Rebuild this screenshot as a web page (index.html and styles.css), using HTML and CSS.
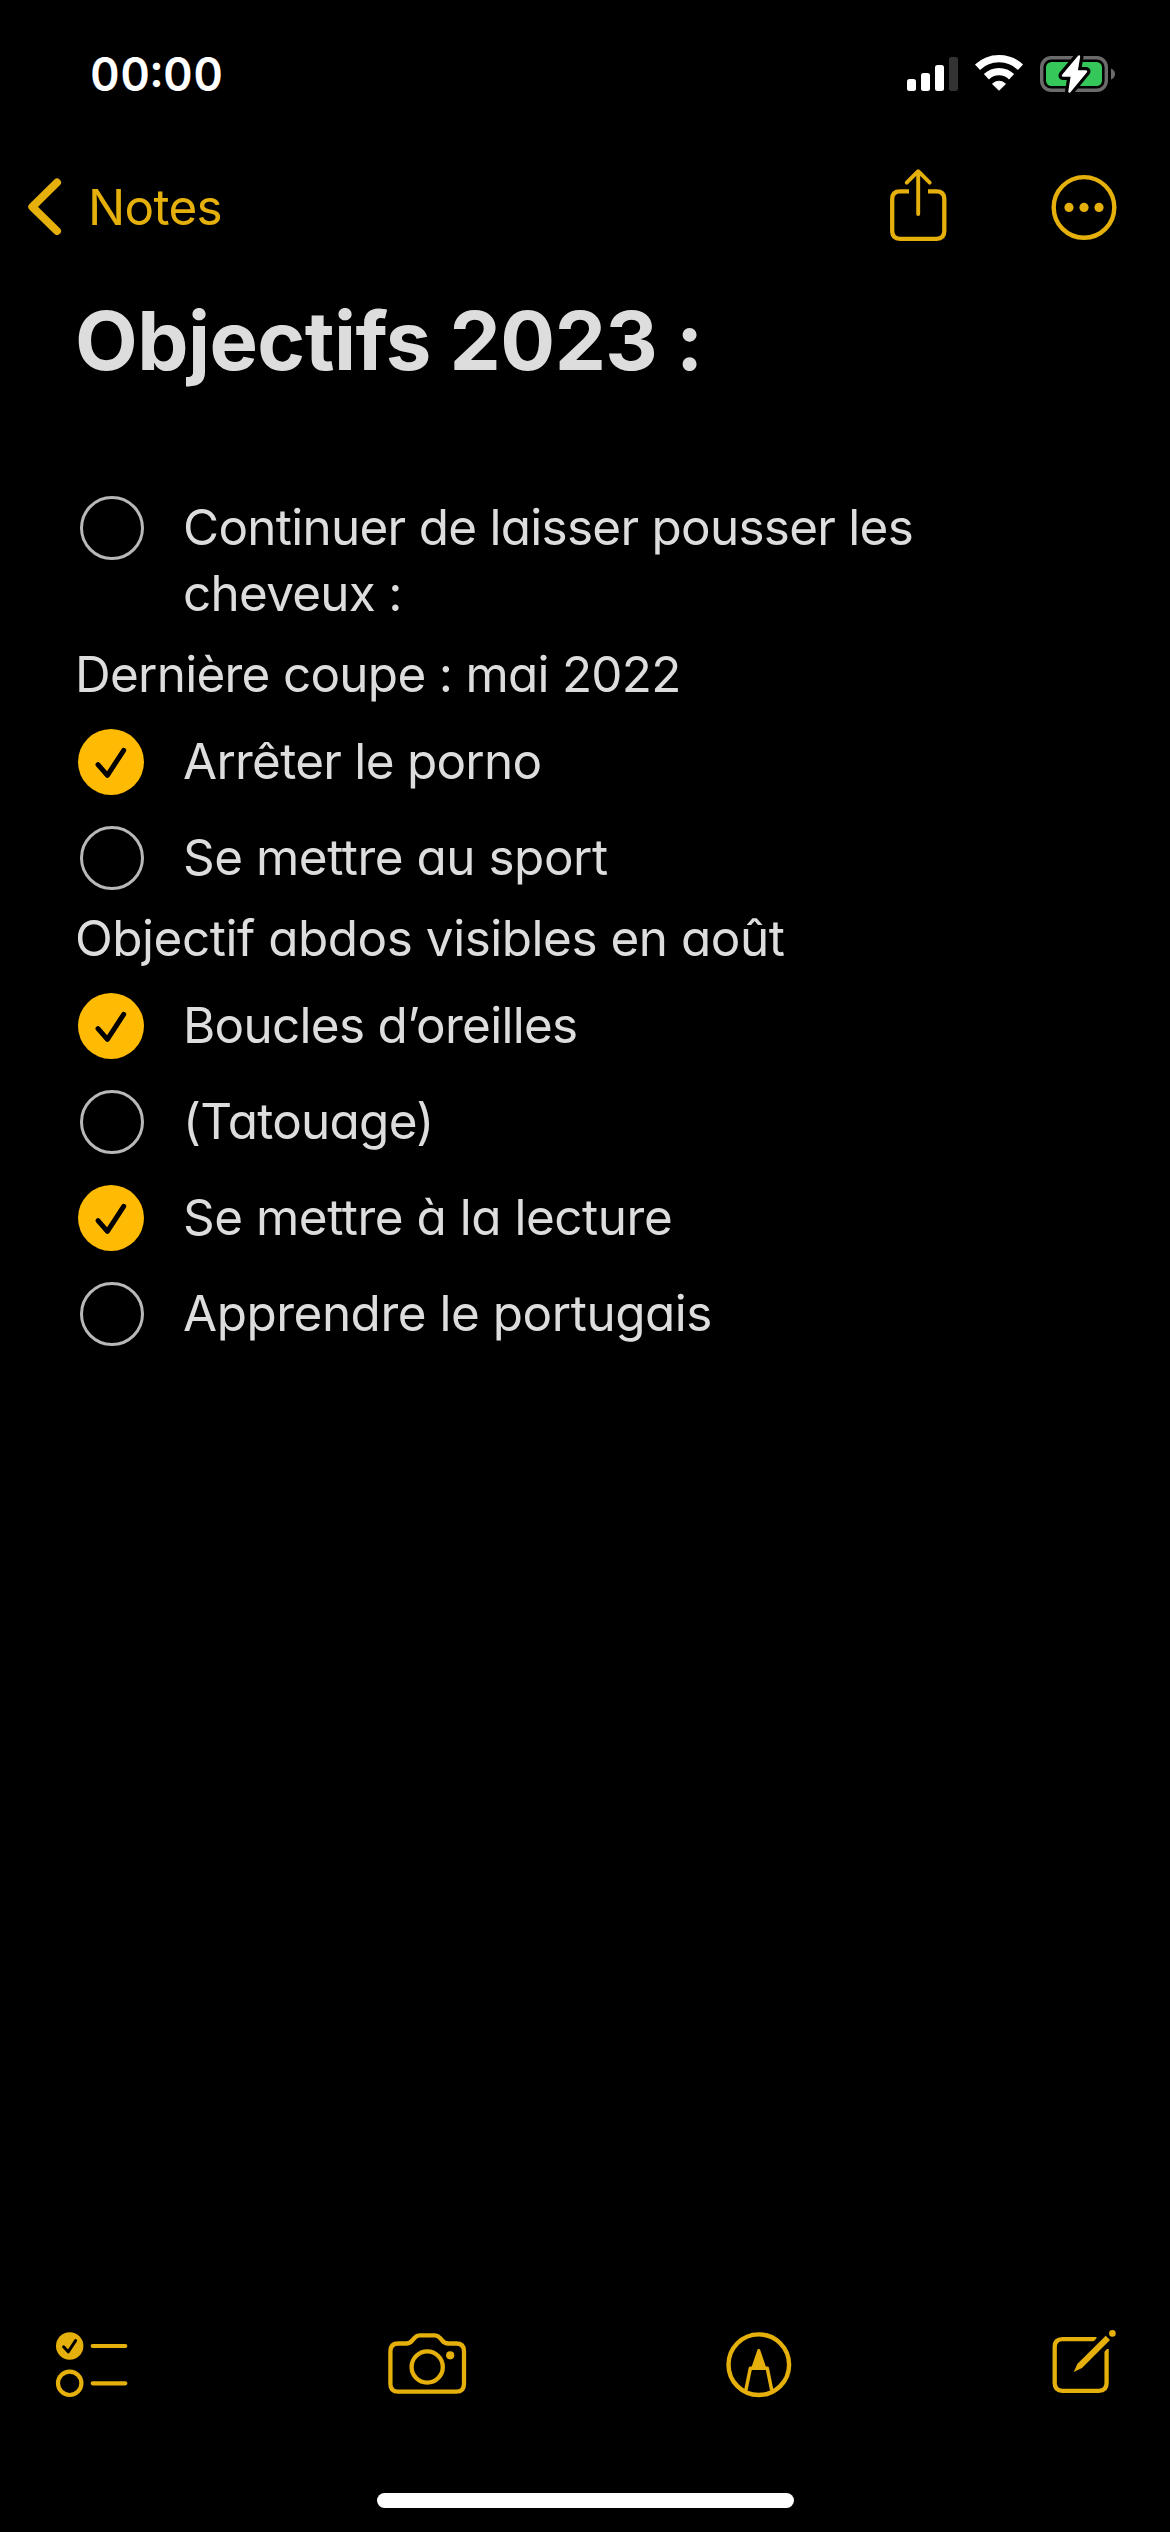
FILE: index.html
```html
<!DOCTYPE html>
<html lang="fr">
<head>
    <meta charset="UTF-8">
    <meta name="viewport" content="width=device-width, initial-scale=1.0">
    <title>Notes</title>
    <link rel="stylesheet" href="styles.css">
</head>
<body>
    <div class="screen">
        <div class="status-bar">
            <span class="time">00:00</span>
            <svg class="status-icons" width="212" height="44" viewBox="905 52 212 44">
                <g fill="#fff">
                    <rect x="907" y="79" width="9" height="12" rx="2.5"/>
                    <rect x="921" y="73" width="9" height="18" rx="2.5"/>
                    <rect x="935" y="65" width="9" height="26" rx="2.5"/>
                    <rect x="949" y="57" width="9" height="34" rx="2.5" fill="#333"/>
                </g>
                <g fill="none" stroke="#fff" stroke-width="7.4">
                    <path d="M977.5 67.2A31.3 31.3 0 0 1 1020.5 67.2"/>
                    <path d="M986.4 76.7A18.3 18.3 0 0 1 1011.6 76.7"/>
                </g>
                <path d="M999 90.3L992.5 83.9A9.2 9.2 0 0 1 1005.5 83.9Z" fill="#fff" stroke="#fff" stroke-width="1" stroke-linejoin="round"/>
                <rect x="1041.7" y="57.7" width="64.6" height="32.6" rx="9.5" fill="none" stroke="#6b6b6b" stroke-width="3.4"/>
                <path d="M1111 68.5Q1115 70 1115 74Q1115 78 1111 79.5Z" fill="#6b6b6b"/>
                <rect x="1046" y="62" width="56" height="24" rx="5.5" fill="#35c75a"/>
                <path d="M1079 56.5L1063 75.5H1072L1069.5 91.5L1086 71.5H1076.5Z" fill="#000" stroke="#000" stroke-width="9" stroke-linejoin="round"/>
                <path d="M1079 56.5L1063 75.5H1072L1069.5 91.5L1086 71.5H1076.5Z" fill="#fff" stroke="#fff" stroke-width="2.4" stroke-linejoin="round"/>
            </svg>
        </div>

        <div class="nav-bar">
            <a class="back">
                <svg width="34" height="58" viewBox="28 178 34 58">
                    <path d="M57 182.5L32.3 206.8L57 231" fill="none" stroke="currentColor" stroke-width="8" stroke-linecap="round" stroke-linejoin="round"/>
                </svg>
                <span class="back-label">Notes</span>
            </a>
            <div class="nav-actions">
                <svg width="60" height="76" viewBox="888 169 60 76" fill="none" stroke="currentColor" stroke-width="4.3">
                    <path d="M909 191.3H900Q892.2 191.3 892.2 199V231Q892.2 238.8 900 238.8H936.5Q944.3 238.8 944.3 231V199Q944.3 191.3 936.5 191.3H928"/>
                    <path d="M918.2 171.5V214M906.7 182.6L918.2 171.2L929.7 182.6" stroke-width="3.9" stroke-linecap="round" stroke-linejoin="round"/>
                </svg>
                <svg width="66" height="76" viewBox="1050.5 169 66 76">
                    <circle cx="1083.5" cy="207.4" r="30.3" fill="none" stroke="currentColor" stroke-width="4.4"/>
                    <g fill="currentColor">
                        <circle cx="1068.5" cy="207.4" r="4.6"/>
                        <circle cx="1083.5" cy="207.4" r="4.6"/>
                        <circle cx="1098.5" cy="207.4" r="4.6"/>
                    </g>
                </svg>
            </div>
        </div>

        <div class="note">
            <h1>Objectifs 2023 :</h1>
            <div class="item"><span class="check"></span><p>Continuer de laisser pousser les<br>cheveux :</p></div>
            <p class="line">Dernière coupe : mai 2022</p>
            <div class="item">
                <span class="check done"><svg width="66" height="66" viewBox="78 729 66 66"><path d="M98 764.6L107.4 775.3L123.7 750.3"/></svg></span>
                <p>Arrêter le porno</p>
            </div>
            <div class="item wide"><span class="check"></span><p>Se mettre au sport</p></div>
            <p class="line wide">Objectif abdos visibles en août</p>
            <div class="item">
                <span class="check done"><svg width="66" height="66" viewBox="78 729 66 66"><path d="M98 764.6L107.4 775.3L123.7 750.3"/></svg></span>
                <p>Boucles d’oreilles</p>
            </div>
            <div class="item"><span class="check"></span><p>(Tatouage)</p></div>
            <div class="item wide">
                <span class="check done"><svg width="66" height="66" viewBox="78 729 66 66"><path d="M98 764.6L107.4 775.3L123.7 750.3"/></svg></span>
                <p>Se mettre à la lecture</p>
            </div>
            <div class="item wide"><span class="check"></span><p>Apprendre le portugais</p></div>
        </div>

        <div class="toolbar">
            <!-- checklist -->
            <svg width="74" height="70" viewBox="55 2330 74 70" fill="none" stroke="currentColor" stroke-width="4.2" stroke-linecap="round" stroke-linejoin="round">
                <circle cx="69.7" cy="2346" r="13.7" fill="currentColor" stroke="none"/>
                <path d="M63.6 2346.8L68.2 2351.8L75.6 2340.6" stroke="#000" stroke-width="3"/>
                <circle cx="69.7" cy="2383.3" r="11.7"/>
                <path d="M92.7 2346H125.3M92.7 2383.3H125.3"/>
            </svg>
            <!-- camera -->
            <svg width="80" height="70" viewBox="387.8 2330 80 70" fill="none" stroke="currentColor" stroke-width="4.3">
                <path d="M398 2343.5H406Q409.5 2343.5 412 2340.5L414.5 2337.7Q416.5 2335.4 419.5 2335.4H434.5Q437.5 2335.4 439.5 2337.7L442 2340.5Q444.5 2343.5 448 2343.5H456Q463.8 2343.5 463.8 2351.3V2384Q463.8 2391.7 456 2391.7H398Q390.2 2391.7 390.2 2384V2351.3Q390.2 2343.5 398 2343.5Z"/>
                <circle cx="427" cy="2367" r="15.6"/>
                <circle cx="450" cy="2355.3" r="4.1" fill="currentColor" stroke="none"/>
            </svg>
            <!-- markup -->
            <svg width="66" height="70" viewBox="726.7 2330 66 70" fill="none" stroke="currentColor">
                <circle cx="758.5" cy="2364.7" r="30.3" stroke-width="4.4"/>
                <path d="M745.6 2390L750 2368.3H767L771.4 2390" stroke-width="3.5" stroke-linejoin="round"/>
                <path d="M758.5 2350.5L752.5 2368H764.5Z" fill="currentColor" stroke-width="3" stroke-linejoin="round"/>
            </svg>
            <!-- compose -->
            <svg width="66" height="70" viewBox="1051.5 2330 66 70" fill="none" stroke="currentColor" stroke-width="4.3">
                <path d="M1097 2339.1H1063Q1055.2 2339.1 1055.2 2347V2383Q1055.2 2390.8 1063 2390.8H1099.3Q1107.1 2390.8 1107.1 2383V2349"/>
                <path d="M1076 2370L1116 2330" stroke="#000" stroke-width="15"/>
                <path d="M1106.2 2335.8L1110.5 2340.1L1082.5 2368L1074.2 2372L1078 2363.7Z" fill="currentColor" stroke="none"/>
                <circle cx="1112.9" cy="2333.4" r="3.3" fill="currentColor" stroke="none"/>
            </svg>
        </div>

        <div class="home-indicator"></div>
    </div>
</body>
</html>
```
FILE: styles.css
```css
* {
    box-sizing: border-box;
}
body {
    margin: 0;
    background-color: #000;
    color: #dddddd;
    font-family: Inter, "Liberation Sans", sans-serif;
}
h1, p {
    margin: 0;
}
svg {
    display: block;
    flex-shrink: 0;
    overflow: visible;
}
.screen {
    width: 1170px;
    height: 2532px;
    display: flex;
    flex-direction: column;
    overflow: hidden;
}
.status-bar {
    height: 148px;
    padding: 52px 53px 0 90px;
    display: flex;
    justify-content: space-between;
    align-items: flex-start;
    color: #fff;
}
.time {
    font-size: 46px;
    font-weight: 600;
    line-height: 44px;
    letter-spacing: 0.4px;
    font-feature-settings: "tnum", "case";
}
.nav-bar {
    height: 118px;
    padding: 0 53.5px 0 28px;
    display: flex;
    justify-content: space-between;
    align-items: center;
    color: #e5b00b;
}
.back {
    display: flex;
    align-items: center;
    gap: 26px;
}
.back-label {
    font-size: 49.4px;
    line-height: 60px;
    letter-spacing: -0.7px;
}
.nav-actions {
    display: flex;
    gap: 102.5px;
}
.note {
    flex: 1;
    padding: 25px 75px 0;
    font-size: 49.4px;
    line-height: 66px;
    letter-spacing: -0.7px;
    font-feature-settings: "cv11";
}
h1 {
    height: 188px;
    font-size: 81.4px;
    font-weight: 700;
    line-height: 100px;
    letter-spacing: -0.55px;
    font-feature-settings: normal;
}
.item {
    display: flex;
    padding: 15px 0;
}
.item p {
    margin-left: 39px;
}
.check {
    width: 64px;
    height: 64px;
    margin: 2px 0 0 5px;
    border: 3.5px solid #b8b8b8;
    border-radius: 50%;
    flex-shrink: 0;
}
.check.done {
    width: 66px;
    height: 66px;
    margin: 1px 0 -1px 3px;
    border: none;
    background-color: #ffba03;
}
.done path {
    fill: none;
    stroke: #000;
    stroke-width: 5px;
    stroke-linecap: round;
    stroke-linejoin: round;
}
.line {
    height: 72px;
}
.wide {
    letter-spacing: -0.45px;
}
.toolbar {
    height: 163px;
    padding: 0 52.5px 0 55px;
    display: flex;
    justify-content: space-between;
    color: #e5b00b;
}
.home-indicator {
    width: 417px;
    height: 15px;
    margin: 0 auto 24px;
    border-radius: 8px;
    background-color: #fff;
}
```
